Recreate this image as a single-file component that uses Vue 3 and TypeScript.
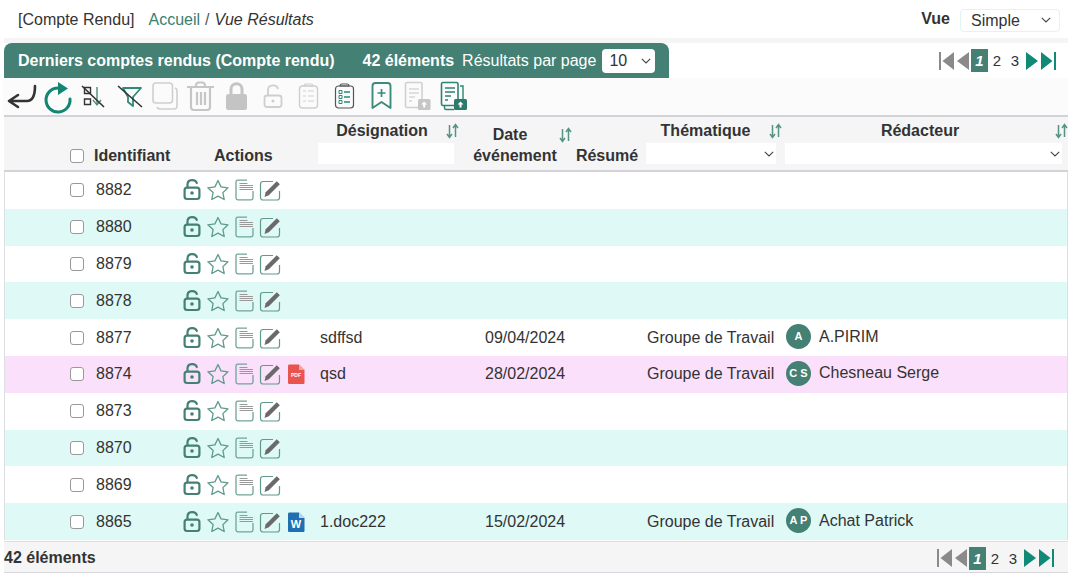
<script setup lang="ts">
interface Row {
  id: number;
  name?: string;
  date?: string;
  theme?: string;
  author?: string;
  initials?: string;
  file?: "pdf" | "word";
  tone?: "alt" | "pink";
}

const rows: Row[] = [
  { id: 8882 },
  { id: 8880, tone: "alt" },
  { id: 8879 },
  { id: 8878, tone: "alt" },
  { id: 8877, name: "sdffsd", date: "09/04/2024", theme: "Groupe de Travail", author: "A.PIRIM", initials: "A" },
  { id: 8874, name: "qsd", date: "28/02/2024", theme: "Groupe de Travail", author: "Chesneau Serge", initials: "C S", file: "pdf", tone: "pink" },
  { id: 8873 },
  { id: 8870, tone: "alt" },
  { id: 8869 },
  { id: 8865, name: "1.doc222", date: "15/02/2024", theme: "Groupe de Travail", author: "Achat Patrick", initials: "A P", file: "word", tone: "alt" },
];

const tools = ["back", "refresh", "unsort", "unfilter", "copy", "trash", "lock", "unlock", "clip", "clip-on", "mark", "doc-up", "docs-up"];
const rowIcons = ["r-unlock", "r-star", "r-doc", "r-edit"];
</script>

<template>
  <svg class="sprite" aria-hidden="true">
    <symbol id="back" viewBox="0 0 36 36">
      <path d="M15 17 6 23l9 6M6 23h18c6 0 8-5 8-15" fill="none" stroke="#333" stroke-width="2.600" stroke-linecap="round" stroke-linejoin="round" />
    </symbol>
    <symbol id="refresh" viewBox="0 0 36 36">
      <path d="M19 10a12 12 0 1 0 12 11" fill="none" stroke="#138573" stroke-width="3" stroke-linecap="round" />
      <path d="M19 4l10 6.500-10 6.500z" fill="#138573" />
    </symbol>
    <symbol id="unsort" viewBox="0 0 36 36">
      <path d="M9.500 9.500h6v6h-6zM9.500 21h6v5.500h-6z" fill="none" stroke="#333" stroke-width="1.400" />
      <path d="M22 9v18M18 22l4 5 4-5" fill="none" stroke="#4d8d7f" stroke-width="1.400" />
      <path d="M7 8l22 21" stroke="#333" stroke-width="1.600" />
    </symbol>
    <symbol id="unfilter" viewBox="0 0 36 36">
      <path d="M12 10h18l-8 9v9l-5-4v-5z" fill="none" stroke="#2f8a78" stroke-width="1.800" stroke-linejoin="round" />
      <path d="M7 8l24 21" stroke="#333" stroke-width="1.600" />
    </symbol>
    <symbol id="copy" viewBox="0 0 36 36">
      <rect x="6" y="5" width="19.500" height="20" rx="3" fill="none" stroke="#cfcfcf" stroke-width="1.600" />
      <path d="M28 10c1.500.500 2 1.500 2 3v15c0 2-1 3-3 3H13c-1.500 0-2.500-.500-3-2" fill="none" stroke="#cfcfcf" stroke-width="1.600" />
    </symbol>
    <symbol id="trash" viewBox="0 0 36 36">
      <path d="M4 9h27M13 8c0-3 1-3.500 3-3.500h3c2 0 3 .500 3 3.500M8 10v19c0 2 1 3 3 3h13c2 0 3-1 3-3V10M14 14v13M18 14v13M22 14v13" fill="none" stroke="#c6c6c6" stroke-width="2.200" />
    </symbol>
    <symbol id="lock" viewBox="0 0 36 36">
      <path d="M12 18v-7c0-7 11-7 11 0v7" fill="none" stroke="#c4c4c4" stroke-width="3" />
      <rect x="7" y="16" width="21" height="16" rx="2.500" fill="#c4c4c4" />
    </symbol>
    <symbol id="unlock" viewBox="0 0 36 36">
      <rect x="9.500" y="17.500" width="17" height="11.500" rx="2.500" fill="none" stroke="#cfcfcf" stroke-width="1.800" />
      <path d="M13 17v-5c0-6 9-6 10-1" fill="none" stroke="#cfcfcf" stroke-width="1.800" />
      <circle cx="18" cy="23" r="1.500" fill="#cfcfcf" />
    </symbol>
    <symbol id="clip" viewBox="0 0 36 36">
      <rect x="8.500" y="8" width="18" height="22" rx="3" fill="none" stroke="#cfcfcf" stroke-width="1.400" />
      <path d="M13 8c0-2 1-2 2-2h5c1 0 2 0 2 2z" fill="none" stroke="#cfcfcf" stroke-width="1.200" />
      <path d="M12 13h3M12 18h3M12 23h3M17 13h6M17 18h6M17 23h6" stroke="#e0e0e0" stroke-width="1.600" />
    </symbol>
    <symbol id="clip-on" viewBox="0 0 36 36">
      <rect x="8.500" y="8" width="18" height="22" rx="3" fill="none" stroke="#555" stroke-width="1.200" />
      <path d="M13 8c0-2 1-2 2-2h5c1 0 2 0 2 2z" fill="none" stroke="#555" stroke-width="1.100" />
      <path d="M12 12.500h3v3h-3zM12 17.500h3v3h-3zM12 22.500h3v3h-3z" fill="none" stroke="#2b8a76" stroke-width="1" />
      <path d="M17 14h6M17 19h6M17 24h6" stroke="#2b8a76" stroke-width="1.400" />
    </symbol>
    <symbol id="mark" viewBox="0 0 36 36">
      <path d="M9.500 8c0-2 1-3 3-3h12c2 0 3 1 3 3v22l-9-6-9 6z" fill="none" stroke="#3c8a79" stroke-width="1.900" stroke-linejoin="round" />
      <path d="M18.500 11v8M14.500 15h8" stroke="#3c8a79" stroke-width="1.700" />
    </symbol>
    <symbol id="doc-up" viewBox="0 0 36 36">
      <path d="M23 24V6c0-1-.500-1.500-1.500-1.500H8C7 4.500 6.500 5 6.500 6v22c0 1 .500 1.500 1.500 1.500h11" fill="none" stroke="#d0d0d0" stroke-width="1.600" />
      <path d="M10 11h10M10 15h10M10 19h6M10 23h3" stroke="#d8d8d8" stroke-width="1.400" />
      <rect x="19" y="21" width="12.500" height="11" rx="1.500" fill="#c6c6c6" />
      <path d="M25.200 23.500l3 3h-2v3h-2v-3h-2z" fill="#fff" />
    </symbol>
    <symbol id="docs-up" viewBox="0 0 36 36">
      <path d="M23 24V6c0-1-.500-1.500-1.500-1.500H8C7 4.500 6.500 5 6.500 6v20c0 1 .500 1.500 1.500 1.500h11" fill="none" stroke="#2c8474" stroke-width="1.600" />
      <path d="M25 8h3v14M9.500 28v1.500c0 1 .500 2 1.500 2h8" fill="none" stroke="#2c8474" stroke-width="1.400" />
      <path d="M10 10h10M10 14h10M10 18h6M10 22h3" stroke="#2c8474" stroke-width="1.500" />
      <rect x="19" y="21" width="13" height="11" rx="1.500" fill="#2c7a6c" />
      <path d="M25.500 23.500l3 3h-2v3h-2v-3h-2z" fill="#fff" />
    </symbol>

    <symbol id="r-unlock" viewBox="0 0 26 26">
      <rect x="5.600" y="10.600" width="14.800" height="11.400" rx="2.500" fill="none" stroke="#448073" stroke-width="2.200" />
      <path d="M8.500 10V7.500c0-5.500 8-5.500 9.300-1.500" fill="none" stroke="#448073" stroke-width="2.200" stroke-linecap="round" />
      <circle cx="13" cy="16" r="1.800" fill="#448073" />
    </symbol>
    <symbol id="r-star" viewBox="0 0 26 26">
      <path d="M13 3.500l3 6.400 7 .900-5.100 4.800 1.300 6.900-6.200-3.400-6.200 3.400 1.300-6.900L2.900 10.800l7-.900z" fill="none" stroke="#5f9a8b" stroke-width="1.300" stroke-linejoin="round" />
    </symbol>
    <symbol id="r-doc" viewBox="0 0 26 26">
      <path d="M22 14v7c0 1-.800 1.800-1.800 1.800H6.800c-1 0-1.800-.800-1.800-1.800V5c0-1 .800-1.800 1.800-1.800h9.200" fill="none" stroke="#6fa596" stroke-width="1.300" />
      <path d="M8.500 6.500h8M8.500 8.500h13.500M8.500 10.500h13.500M8.500 12.500h13.500" stroke="#999" stroke-width="1" />
    </symbol>
    <symbol id="r-edit" viewBox="0 0 26 26">
      <path d="M22.500 14v6.500c0 1.500-1 2.500-2.500 2.500H6c-1.500 0-2.500-1-2.500-2.500V7C3.500 5.500 4.500 4.500 6 4.500h10" fill="none" stroke="#5f9a8b" stroke-width="1.200" />
      <path d="M7.500 20l1.200-4.800L19.800 4.200l3 3L11.800 18.300z" fill="#6a6a6a" />
    </symbol>
    <symbol id="r-pdf" viewBox="0 0 26 26">
      <path d="M5 5c0-1 .500-1.500 1.500-1.500H16L21.500 9v12.500c0 1-.500 1.500-1.500 1.500H6.500C5.500 23 5 22.500 5 21.500z" fill="#e8554f" />
      <path d="M16 3.500V9h5.500z" fill="#f3a7a0" />
      <text x="13" y="15.500" text-anchor="middle" class="file-text pdf-text">PDF</text>
    </symbol>
    <symbol id="r-word" viewBox="0 0 26 26">
      <path d="M5 5c0-1 .500-1.500 1.500-1.500H16L21.500 9v12.500c0 1-.500 1.500-1.500 1.500H6.500C5.500 23 5 22.500 5 21.500z" fill="#1f6fb2" />
      <path d="M16 3.500V9h5.500z" fill="#c6d4ee" />
      <text x="13" y="18.500" text-anchor="middle" class="file-text word-text">W</text>
    </symbol>

    <symbol id="sort" viewBox="0 0 13 18">
      <path d="M3.500 3v12M1 12l2.500 3.500L6 12M9.500 15V3M7 6l2.500-3.500L12 6" fill="none" stroke="#559384" stroke-width="1.500" />
    </symbol>
    <symbol id="chev" viewBox="0 0 10 6">
      <path d="M.800.800 5 5l4.200-4.200" fill="none" stroke="#444" stroke-width="1.100" />
    </symbol>
    <symbol id="p-first" viewBox="0 0 15 18">
      <path d="M1 0v18" stroke="#8a8a8a" stroke-width="2" />
      <path d="M15 0v18L3.500 9z" fill="#8a8a8a" />
    </symbol>
    <symbol id="p-prev" viewBox="0 0 12 18"><path d="M12 0v18L0 9z" fill="#8a8a8a" /></symbol>
    <symbol id="p-next" viewBox="0 0 12 18"><path d="M0 0v18L12 9z" fill="#108a76" /></symbol>
    <symbol id="p-last" viewBox="0 0 15 18">
      <path d="M14 0v18" stroke="#108a76" stroke-width="2" />
      <path d="M0 0v18L11.500 9z" fill="#108a76" />
    </symbol>
  </svg>

  <div class="page">
    <header class="crumbs">
      <span class="module">[Compte Rendu]</span>
      <a class="crumb-link">Accueil</a>
      <span class="sep">/</span>
      <em class="crumb-here">Vue Résultats</em>
      <strong class="view-label">Vue</strong>
      <div class="view-select">
        <select><option>Simple</option></select>
        <svg class="chev"><use href="#chev" /></svg>
      </div>
    </header>

    <section class="panel">
      <div class="title-row">
        <div class="tab">
          <strong class="tab-title">Derniers comptes rendus (Compte rendu)</strong>
          <strong class="tab-count">42 éléments</strong>
          <span class="tab-per">Résultats par page</span>
          <div class="per-select">
            <select><option>10</option></select>
            <svg class="chev"><use href="#chev" /></svg>
          </div>
        </div>
        <nav class="pager pager-top">
          <svg class="p-edge"><use href="#p-first" /></svg>
          <svg class="p-step p-prev"><use href="#p-prev" /></svg>
          <b class="p-current">1</b>
          <span class="p-num">2</span>
          <span class="p-num">3</span>
          <svg class="p-step p-next"><use href="#p-next" /></svg>
          <svg class="p-edge p-last"><use href="#p-last" /></svg>
        </nav>
      </div>

      <div class="toolbar">
        <svg v-for="tool in tools" :key="tool" class="tool"><use :href="`#${tool}`" /></svg>
      </div>

      <div class="table-head">
        <div class="h-check"><input type="checkbox" /></div>
        <div class="h-end h-id">Identifiant</div>
        <div class="h-end h-actions">Actions</div>
        <div class="h-field h-name">
          <div class="h-title">
            <span>Désignation</span>
            <svg class="sort"><use href="#sort" /></svg>
          </div>
          <input class="filter" type="text" />
        </div>
        <div class="h-date">
          <div class="h-title h-title-low">
            <span>Date</span>
            <svg class="sort"><use href="#sort" /></svg>
          </div>
          <div class="h-date-2">événement</div>
        </div>
        <div class="h-end h-resume">Résumé</div>
        <div class="h-field h-theme">
          <div class="h-title">
            <span>Thématique</span>
            <svg class="sort"><use href="#sort" /></svg>
          </div>
          <div class="filter filter-select"><svg class="chev"><use href="#chev" /></svg></div>
        </div>
        <div class="h-field h-author">
          <div class="h-title">
            <span>Rédacteur</span>
            <svg class="sort"><use href="#sort" /></svg>
          </div>
          <div class="filter filter-select"><svg class="chev"><use href="#chev" /></svg></div>
        </div>
      </div>

      <div class="rows">
        <div v-for="row in rows" :key="row.id" class="row" :class="row.tone">
          <div class="c-check"><input type="checkbox" /></div>
          <div class="c-id">{{ row.id }}</div>
          <div class="c-actions">
            <svg v-for="icon in rowIcons" :key="icon" class="r-icon"><use :href="`#${icon}`" /></svg>
            <svg v-if="row.file" class="r-icon"><use :href="`#r-${row.file}`" /></svg>
          </div>
          <div class="c-name">{{ row.name }}</div>
          <div class="c-date">{{ row.date }}</div>
          <div></div>
          <div class="c-theme">{{ row.theme }}</div>
          <div class="c-author">
            <template v-if="row.author">
              <span class="avatar">{{ row.initials }}</span>
              <span class="author-name">{{ row.author }}</span>
            </template>
          </div>
        </div>
      </div>

      <footer class="foot">
        <strong>42 éléments</strong>
        <nav class="pager pager-bottom">
          <svg class="p-edge"><use href="#p-first" /></svg>
          <svg class="p-step p-prev"><use href="#p-prev" /></svg>
          <b class="p-current">1</b>
          <span class="p-num">2</span>
          <span class="p-num">3</span>
          <svg class="p-step p-next"><use href="#p-next" /></svg>
          <svg class="p-edge p-last"><use href="#p-last" /></svg>
        </nav>
      </footer>
    </section>
  </div>
</template>

<style>
html,
body {
  background: #fff;
}
</style>

<style scoped>
.sprite {
  display: none;
}

.page {
  --green: #448073;
  --rest: 89px 137px 142px 114px 70px 139px 1fr;

  width: 1074px;
  height: 580px;
  overflow: hidden;

  color: #333;
  font-family: "Liberation Sans", Arial, sans-serif;
  font-size: 16px;
}

.crumbs {
  height: 38px;
  padding: 2px 14px 0 18px;
  display: flex;
  align-items: center;
  box-sizing: border-box;
}

.crumb-link {
  margin-left: 14px;
  color: #3a8070;
}

.sep {
  margin: 0 5px;
  color: #555;
}

.view-label {
  margin-left: auto;
  margin-right: 10px;
  position: relative;
  top: -1px;
}

.view-select {
  width: 100px;
  height: 23px;
  border: 1px solid #e0f4f1;
  border-radius: 4px;
  display: flex;
  align-items: center;
  justify-content: space-between;
  box-sizing: border-box;
}

select {
  appearance: none;
  border: none;
  background: transparent;
  color: #333;
  font: inherit;
  padding: 0;
  outline: none;
}

.view-select select {
  margin-left: 10px;
  width: 70px;
}

.view-select .chev {
  margin-right: 8px;
}

.chev {
  width: 10px;
  height: 6px;
  flex: none;
}

.panel {
  width: 1064px;
  margin-left: 4px;
  border-top: 5px solid #f5f5f5;
}

.title-row {
  height: 35px;
  display: flex;
  justify-content: space-between;
  background: #fff;
}

.tab {
  width: 665px;
  padding-left: 14px;
  border-radius: 8px 8px 0 0;
  background: var(--green);
  color: #fff;
  display: flex;
  align-items: center;
  box-sizing: border-box;
}

.tab-count {
  margin-left: 28px;
}

.tab-per {
  margin-left: 8px;
}

.per-select {
  width: 53px;
  height: 24px;
  margin-left: 6px;
  border-radius: 4px;
  background: #fff;
  display: flex;
  align-items: center;
  justify-content: space-between;
}

.per-select select {
  margin-left: 7px;
  width: 30px;
}

.per-select .chev {
  margin-right: 4px;
}

.pager {
  display: flex;
  align-items: center;
}

.pager-top {
  padding-right: 12px;
}

.pager-bottom {
  padding-right: 14px;
}

.p-edge {
  width: 15px;
  height: 18px;
  flex: none;
}

.p-step {
  width: 12px;
  height: 18px;
  flex: none;
}

.p-prev {
  margin: 0 2px 0 3px;
}

.p-next {
  margin-left: 2px;
}

.p-last {
  margin-left: 3px;
}

.p-current {
  width: 17px;
  height: 23px;
  background: var(--green);
  color: #fff;
  font-style: italic;
  line-height: 23px;
  text-align: center;
  font-size: 15px;
}

.p-num {
  width: 18px;
  text-align: center;
  font-size: 15px;
}

.toolbar {
  height: 37px;
  margin-left: -1px;
  background: #fbfbfb;
  display: flex;
}

.tool {
  width: 36px;
  height: 36px;
  flex: none;
}

.table-head {
  height: 57px;
  border-top: 2px solid #d2d2d8;
  border-bottom: 2px solid #d2d2d8;
  background: #f5f5f5;
  font-weight: 700;
  display: grid;
  grid-template-columns: 86px var(--rest);
  box-sizing: border-box;
}

.h-check {
  padding: 0 6px 7px 0;
  display: flex;
  align-items: flex-end;
  justify-content: flex-end;
}

input[type="checkbox"] {
  appearance: none;
  width: 14px;
  height: 14px;
  margin: 0;
  border: 1.5px solid #999;
  border-radius: 3px;
  background: #fff;
  box-sizing: border-box;
}

.h-end {
  padding-bottom: 5px;
  align-self: end;
}

.h-actions {
  padding-left: 35px;
}

.h-resume {
  text-align: center;
}

.h-field {
  padding: 0 4px 6px 2px;
  display: flex;
  flex-direction: column;
  justify-content: flex-end;
}

.h-id {
  margin-left: 4px;
}

.h-title {
  height: 24px;
  display: flex;
  align-items: center;
}

.h-title span {
  flex: 1;
  text-align: center;
}

.sort {
  width: 13px;
  height: 18px;
  flex: none;
}

.filter {
  height: 21px;
  padding: 0;
  border: none;
  background: #fff;
  box-sizing: border-box;
  display: block;
  width: 136px;
  outline: none;
}

.filter-select {
  width: auto;
  display: flex;
  align-items: center;
  justify-content: flex-end;
  padding-right: 2px;
}

.h-name .h-title {
  margin-right: -5px;
}

.h-theme {
  padding: 0 5px 6px 4px;
}

.h-theme .h-title,
.h-author .h-title {
  margin: 0 -6px 0 -4px;
}

.h-author {
  padding: 0 6px 6px 4px;
}

.h-author .h-title span {
  padding-left: 4px;
}

.h-date {
  display: flex;
  flex-direction: column;
  justify-content: flex-end;
  padding-bottom: 5px;
}

.h-title-low {
  height: 22px;
  margin-bottom: 1px;
}

.h-title-low span {
  padding-left: 3px;
}

.h-date-2 {
  text-align: center;
}

.rows {
  height: 369px;
  display: grid;
  grid-auto-rows: 36.8px;
}

.row {
  border-left: 1px solid #dcdfe2;
  border-right: 1px solid #dcdfe2;
  display: grid;
  grid-template-columns: 85px var(--rest);
  align-items: center;
  background: #fff;
}

.row.alt {
  background: #def9f6;
}

.row.pink {
  background: #fbe0fb;
}

.c-check {
  padding-right: 6px;
  display: flex;
  justify-content: flex-end;
}

.c-id {
  padding-left: 6px;
}

.c-actions {
  display: flex;
  align-items: center;
}

.r-icon {
  width: 26px;
  height: 26px;
  flex: none;
}

.file-text {
  fill: #fff;
  font-family: "Liberation Sans", Arial, sans-serif;
  font-weight: 700;
}

.pdf-text {
  font-size: 5px;
}

.word-text {
  font-size: 11px;
}

.c-name {
  padding-left: 4px;
}

.c-date {
  padding-left: 27px;
}

.c-theme {
  padding-left: 5px;
  white-space: nowrap;
}

.c-author {
  padding-left: 5px;
  display: flex;
  align-items: center;
  position: relative;
  top: -1px;
}

.avatar {
  width: 25px;
  height: 25px;
  margin-right: 8px;
  border-radius: 50%;
  background: var(--green);
  color: #fff;
  font-size: 11px;
  font-weight: 700;
  line-height: 25px;
  text-align: center;
  white-space: nowrap;
}

.foot {
  height: 32px;
  padding-top: 2px;
  border-top: 1px solid #dcdfe2;
  border-bottom: 1px solid #d6d6dc;
  background: #f5f5f5;
  display: flex;
  align-items: center;
  justify-content: space-between;
  box-sizing: border-box;
}
</style>
